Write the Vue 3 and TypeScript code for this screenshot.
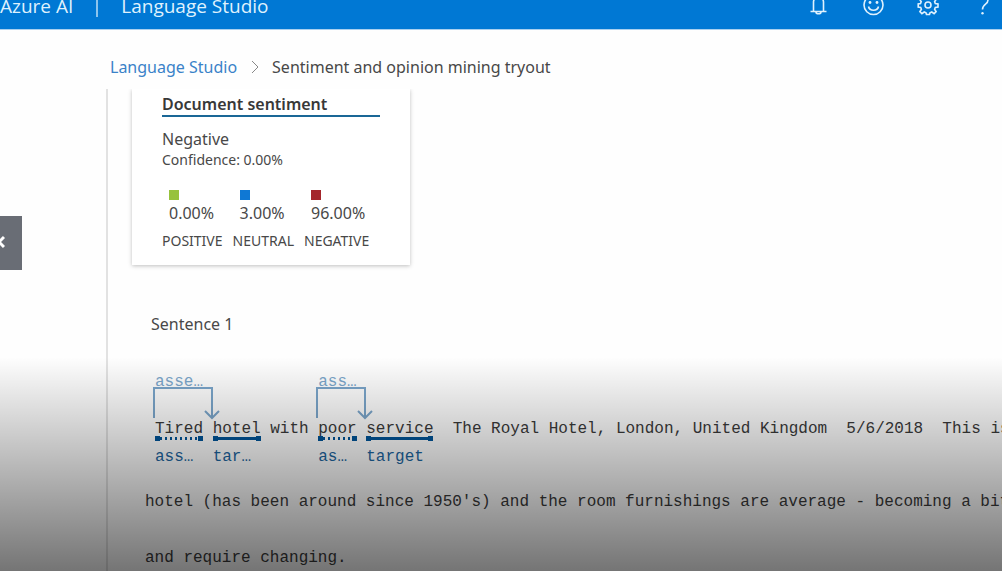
<script setup lang="ts">
interface Score {
  name: string
  value: string
  tone: string
}

interface Token {
  text: string
  role?: 'assessment' | 'target'
  label?: string
  relation?: { label: string; span: number }
}

const scores: Score[] = [
  { name: 'POSITIVE', value: '0.00%', tone: 'positive' },
  { name: 'NEUTRAL', value: '3.00%', tone: 'neutral' },
  { name: 'NEGATIVE', value: '96.00%', tone: 'negative' },
]

const tokens: Token[] = [
  { text: 'Tired', role: 'assessment', label: 'ass…', relation: { label: 'asse…', span: 58 } },
  { text: ' ' },
  { text: 'hotel', role: 'target', label: 'tar…' },
  { text: ' with ' },
  { text: 'poor', role: 'assessment', label: 'as…', relation: { label: 'ass…', span: 48 } },
  { text: ' ' },
  { text: 'service', role: 'target', label: 'target' },
  { text: '  The Royal Hotel, London, United Kingdom  5/6/2018  This is' },
]
</script>

<template>
  <div class="page">
    <header class="topbar">
      <div class="topbar-row">
        <span class="brand">Azure AI</span>
        <span class="divider"></span>
        <span class="product">Language Studio</span>
        <nav class="actions" aria-label="Tools">
          <button type="button" aria-label="Notifications">
            <svg viewBox="0 0 22 22"><path d="M6.500 17V8a5 5 0 0 1 10 0v9M3.500 17.500h16M9 18a2.500 1.800 0 0 0 5 0" /></svg>
          </button>
          <button type="button" aria-label="Feedback">
            <svg viewBox="0 0 22 22"><circle cx="11.500" cy="11" r="9.500" /><path d="M6.500 12.500c1 5 9 5 10 0" /><circle class="dot" cx="8" cy="8.500" r="1.400" /><circle class="dot" cx="15" cy="8.500" r="1.400" /></svg>
          </button>
          <button type="button" aria-label="Settings">
            <svg viewBox="0 0 22 22"><path d="M9.500 1.500h3l.5 2.700 1.800.8 2.300-1.600 2 2-1.500 2.300.7 1.800 2.700.5v3l-2.700.5-.7 1.800 1.500 2.300-2 2-2.300-1.600-1.800.8-.5 1.700h-3l-.5-1.700-1.800-.8-2.300 1.600-2-2 1.500-2.300-.7-1.800L1.200 13v-3l2.300-.5.7-1.800-1.500-2.300 2-2L6.700 5l1.800-.8z" /><circle cx="11" cy="11" r="3" /></svg>
          </button>
          <button type="button" aria-label="Help">
            <svg viewBox="0 0 22 22"><path d="M6 6a5 5 0 1 1 7.800 3.800c-2 1.500-3.300 2.600-3.300 5.700" /><circle class="dot" cx="10.500" cy="19.300" r="1.200" /></svg>
          </button>
        </nav>
      </div>
    </header>

    <nav class="crumbs" aria-label="Breadcrumb">
      <a href="#">Language Studio</a>
      <svg class="crumb-arrow" viewBox="0 0 8 14"><path d="M1 1l6 6-6 6" /></svg>
      <span>Sentiment and opinion mining tryout</span>
    </nav>

    <main class="results">
      <section class="card">
        <h2>Document sentiment</h2>
        <p class="verdict">Negative</p>
        <p class="confidence">Confidence: 0.00%</p>
        <div class="scores">
          <div v-for="s in scores" :key="s.name" class="score">
            <span class="swatch" :class="s.tone"></span>
            <span class="value">{{ s.value }}</span>
            <span class="name">{{ s.name }}</span>
          </div>
        </div>
      </section>

      <section class="sentence">
        <h3>Sentence 1</h3>
        <div class="tokens">
          <span v-for="(t, i) in tokens" :key="i" class="token">
            <span v-if="t.relation" class="relation">
              <span class="relation-label">{{ t.relation.label }}</span>
              <svg :width="t.relation.span + 9" height="34">
                <path :d="`M1 32V2H${t.relation.span + 1}V31`" />
                <path :d="`M${t.relation.span - 6} 25l7 7 7-7`" />
              </svg>
            </span>
            <span class="word">{{ t.text }}</span>
            <span v-if="t.role" class="mark" :class="t.role"></span>
            <span v-if="t.label" class="role">{{ t.label }}</span>
          </span>
        </div>
        <p class="line">hotel (has been around since 1950's) and the room furnishings are average - becoming a bit</p>
        <p class="line">and require changing.</p>
      </section>
    </main>

    <div class="shade"></div>
    <button class="previous" type="button" aria-label="Previous">
      <svg viewBox="0 0 8 14"><path d="M7 2L2 7l5 5" /></svg>
    </button>
  </div>
</template>

<style>
body {
  margin: 0;
}
</style>

<style scoped>
.page {
  position: relative;
  display: flex;
  flex-direction: column;
  min-height: 100vh;
  overflow: hidden;
  background: #fefefe;
  color: #484848;
  font-family: "Noto Sans", "Open Sans", sans-serif;
  font-size: 16px;
}

.topbar {
  height: 29px;
  overflow: hidden;
  background: #0078d4;
  border-bottom: 1px solid #a9d0ef;
  box-sizing: content-box;
  color: #dff1fd;
}

.topbar-row {
  display: flex;
  align-items: center;
  height: 12px;
  padding-right: 8px;
  font-family: "Open Sans", sans-serif;
  font-size: 19px;
  white-space: nowrap;
}

.divider {
  width: 2px;
  height: 22px;
  margin: 0 23px;
  background: #8cc4ed;
}

.actions {
  display: flex;
  align-items: center;
  align-self: flex-start;
  gap: 33px;
  height: 10px;
  margin-left: auto;
}

.actions button {
  width: 22px;
  height: 22px;
  padding: 0;
  border: 0;
  background: none;
  color: inherit;
}

svg {
  display: block;
  fill: none;
  stroke: currentColor;
}

.actions svg {
  width: 22px;
  height: 22px;
  stroke-width: 1.6;
}

.actions .dot {
  fill: currentColor;
  stroke: none;
}

.crumbs {
  display: flex;
  align-items: center;
  height: 59px;
  padding: 14px 0 0 110px;
  box-sizing: border-box;
  line-height: 24px;
  white-space: nowrap;
}

.crumbs a {
  color: #3a82c8;
  text-decoration: none;
}

.crumb-arrow {
  width: 8px;
  height: 14px;
  margin: 0 13px 0 14px;
  color: #888;
}

.results {
  flex: 1;
  margin-left: 106px;
  padding-left: 24px;
  border-left: 2px solid #e2e2e2;
  overflow: hidden;
}

.card {
  width: 278px;
  height: 176px;
  padding: 5px 30px 0;
  box-sizing: border-box;
  background: #fff;
  box-shadow: 0 1px 4px rgba(0, 0, 0, 0.25);
}

h2,
h3,
p {
  margin: 0;
}

h2 {
  border-bottom: 2px solid #1a6796;
  color: #383838;
  font-size: 16px;
  font-weight: 600;
  line-height: 21px;
}

.verdict {
  padding-top: 11px;
  line-height: 22px;
}

.confidence {
  font-size: 14px;
  line-height: 20px;
}

.scores {
  display: flex;
  gap: 10px;
  margin-top: 20px;
  white-space: nowrap;
}

.score {
  display: flex;
  flex-direction: column;
}

.swatch {
  width: 10px;
  height: 10px;
  margin-left: 7px;
}

.positive {
  background: #97c23c;
}

.neutral {
  background: #0f78d4;
}

.negative {
  background: #a4262c;
}

.value {
  margin-left: 7px;
  font-size: 16px;
  line-height: 26px;
}

.name {
  font-size: 14px;
  line-height: 30px;
}

.sentence {
  padding-left: 13px;
}

h3 {
  margin: 48px 0 0 6px;
  font-size: 16px;
  font-weight: 400;
  line-height: 22px;
}

.tokens {
  display: flex;
  padding: 84px 0 0 10px;
}

.tokens,
.line {
  color: #3a3a3a;
  font-family: "Liberation Mono", monospace;
  font-size: 16px;
  line-height: 20px;
  white-space: pre;
}

.token {
  position: relative;
  display: flex;
  flex-direction: column;
}

.relation {
  position: absolute;
  top: -47px;
  left: -2px;
  color: #7ba6cb;
}

.relation-label {
  display: block;
  height: 14px;
  padding-left: 2px;
}

.relation svg {
  stroke-width: 2;
}

.word {
  height: 17px;
}

.mark {
  display: flex;
  justify-content: space-between;
  align-items: center;
  height: 5px;
  color: #00559a;
}

.mark::before,
.mark::after {
  content: "";
  width: 5px;
  height: 5px;
  background: currentColor;
}

.mark.target {
  background: linear-gradient(currentColor, currentColor) center / 100% 3px no-repeat;
}

.mark.assessment {
  background: repeating-linear-gradient(90deg, currentColor 0 2px, transparent 2px 5px) center / 100% 3px no-repeat;
}

.role {
  margin-top: 6px;
  color: #1c65a0;
}

.line {
  margin-top: 25px;
}

.line + .line {
  margin-top: 36px;
}

.shade {
  position: absolute;
  right: 0;
  bottom: 0;
  left: 0;
  height: 214px;
  background: linear-gradient(transparent, rgba(0, 0, 0, 0.54));
  pointer-events: none;
}

.previous {
  position: absolute;
  top: 216px;
  left: 0;
  width: 22px;
  height: 54px;
  padding: 0 0 3px;
  border: 0;
  background: #696d75;
  color: #fff;
}

.previous svg {
  width: 8px;
  height: 14px;
  margin-left: -3px;
  stroke-width: 3;
}
</style>
